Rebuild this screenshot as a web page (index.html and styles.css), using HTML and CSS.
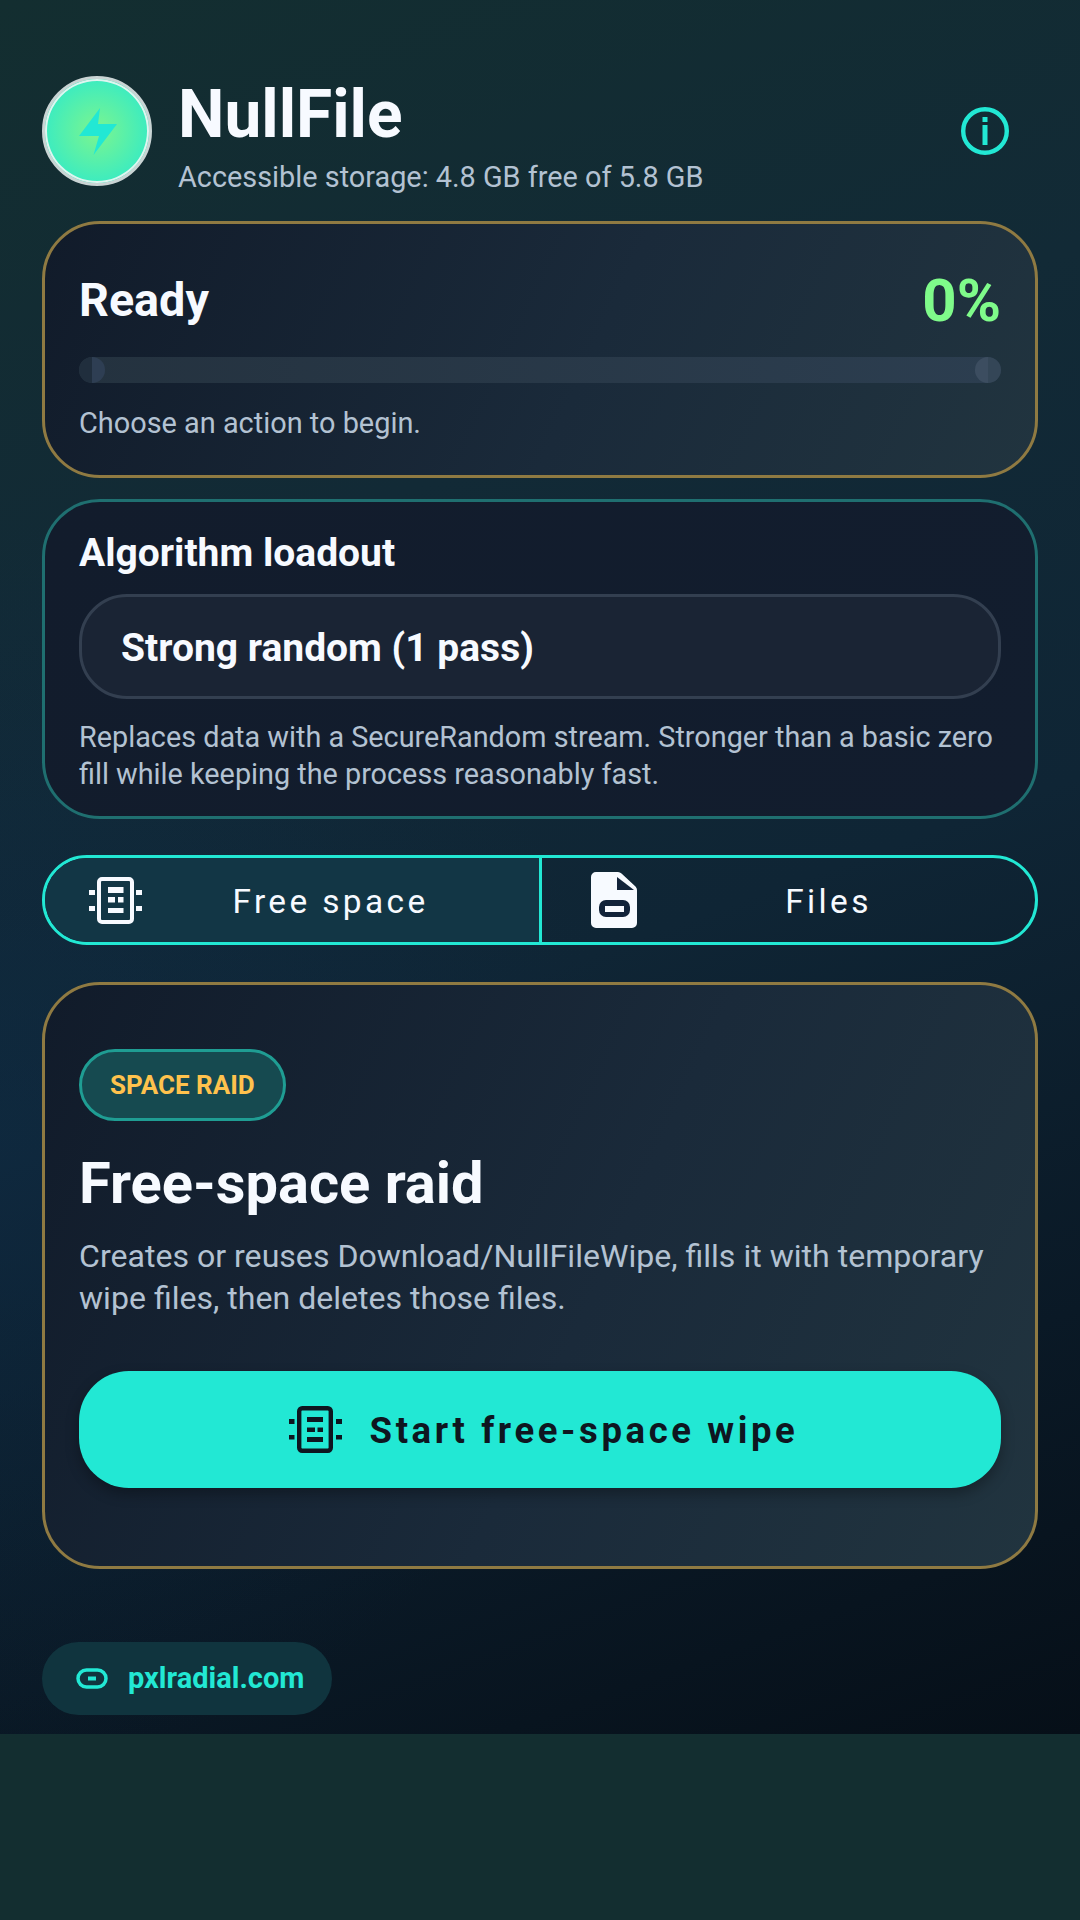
FILE: index.html
```html
<html>
    <head>
        <meta charset="utf-8">
        <title>NullFile</title>
        <link rel="stylesheet" href="styles.css">
    </head>
    <body>
        <div class="app">
            <div class="header">
                <div class="logo">
                    <svg class="bolt" width="38" height="47" viewBox="0 0 38 47"><path d="M21 0 L0 28 H20 L14.5 47 L38 16 H19 Z" fill="#22e8d4"/></svg>
                </div>
                <div class="headerText">
                    <div class="appName">NullFile</div>
                    <div class="storage">Accessible storage: 4.8 GB free of 5.8 GB</div>
                </div>
                <svg class="infoIcon" width="48" height="48" viewBox="0 0 48 48">
                    <circle cx="24" cy="24" r="21.8" fill="none" stroke="#22e8d4" stroke-width="4.4"/>
                    <rect x="21.5" y="18" width="5" height="20" fill="#22e8d4"/>
                    <rect x="21.5" y="10" width="5" height="5" fill="#22e8d4"/>
                </svg>
            </div>

            <div class="card goldCard statusCard">
                <div class="statusRow">
                    <div class="statusTitle">Ready</div>
                    <div class="statusPercent">0%</div>
                </div>
                <div class="progressTrack"></div>
                <div class="statusNote">Choose an action to begin.</div>
            </div>

            <div class="card tealCard">
                <div class="loadoutTitle">Algorithm loadout</div>
                <div class="selectBox">Strong random (1 pass)</div>
                <div class="loadoutNote">Replaces data with a SecureRandom stream. Stronger than a basic zero fill while keeping the process reasonably fast.</div>
            </div>

            <div class="tabs">
                <div class="tab tabActive">
                    <svg class="tabIcon" width="53" height="47" viewBox="0 0 53 47">
                        <rect x="10" y="2" width="33" height="43" rx="3" fill="none" stroke="#f7faff" stroke-width="4"/>
                        <path d="M19 10h15.5v6H19zM19 20h7v5.5h-7zM29 20h5.500v5.500H29zM19 31h15.500v5H19zM0 13h6v5H0zM0 29h6v5H0zM47 13h6v5h-6zM47 29h6v5h-6z" fill="#f7faff"/>
                    </svg>
                    <span class="tabLabel">Free space</span>
                </div>
                <div class="tab filesTab">
                    <svg class="tabIcon" width="46" height="56" viewBox="0 0 46 56">
                        <path d="M5 0H27Q29 0 30.500 1.500L44.500 14.500Q46 16 46 18V51a5 5 0 0 1-5 5H5a5 5 0 0 1-5-5V5a5 5 0 0 1 5-5Z" fill="#f7faff"/>
                        <path d="M26 5 L43 18 H26Z" fill="#12233a"/>
                        <rect x="8" y="28" width="31" height="17" rx="7" fill="#12233a"/>
                        <rect x="14" y="34" width="19" height="6" fill="#f7faff"/>
                    </svg>
                    <span class="tabLabel">Files</span>
                </div>
            </div>

            <div class="card goldCard raidCard">
                <div class="badge">SPACE RAID</div>
                <div class="raidTitle">Free-space raid</div>
                <div class="raidNote">Creates or reuses Download/NullFileWipe, fills it with temporary wipe files, then deletes those files.</div>
                <div class="startButton">
                    <svg width="53" height="47" viewBox="0 0 53 47">
                        <rect x="10.200" y="2.200" width="31.600" height="42.600" rx="3" fill="none" stroke="#0e1620" stroke-width="4.400"/>
                        <path d="M18 11h16v5H18zM18 21.500h8v4.500h-8zM28.500 21.500h5.500v4.500h-5.500zM18 31h16v5H18zM0 13h5.500v5H0zM0 29h5.500v4.500H0zM47 13h6v5h-6zM47 29h6v4.500h-6z" fill="#0e1620"/>
                    </svg>
                    <span class="startLabel">Start free-space wipe</span>
                </div>
            </div>

            <div class="sitePill">
                <svg width="32" height="21" viewBox="0 0 32 21">
                    <rect x="2" y="2" width="28" height="17" rx="8.500" fill="none" stroke="#22e8d4" stroke-width="3.500"/>
                    <rect x="12" y="8.500" width="8" height="4" fill="#22e8d4"/>
                </svg>
                <span class="siteLabel">pxlradial.com</span>
            </div>
        </div>
    </body>
</html>
```

FILE: styles.css
```css
body {
    margin: 0;
    padding: 0;
    width: 1080px;
    height: 1920px;
    overflow: hidden;
    background-color: #132e30;
    font-family: Roboto, sans-serif;
    color: #f7faff;
}
.app {
    box-sizing: border-box;
    height: 1734px;
    padding: 76px 42px 0;
    background:
        radial-gradient(ellipse 620px 620px at 0 1140px, rgba(14, 44, 72, 0.45), rgba(14, 44, 72, 0)),
        linear-gradient(160deg, #132e30 0%, #122a36 30%, #0f2535 55%, #0a1926 80%, #060f18 100%);
}

/* header */
.header {
    display: flex;
    align-items: flex-start;
    height: 145px;
}
.logo {
    box-sizing: border-box;
    width: 110px;
    height: 110px;
    border-radius: 50%;
    border: 3px solid #c9d4d4;
    box-shadow: inset 0 0 0 2px #dff5f0;
    background: radial-gradient(circle, #7cf58e 0%, #22e8d4 100%);
    display: flex;
    align-items: center;
    justify-content: center;
    flex-shrink: 0;
}
.bolt {
    margin-left: 2px;
}
.headerText {
    margin-left: 26px;
    flex-grow: 1;
}
.appName {
    font-size: 65.8px;
    font-weight: 700;
    line-height: 70px;
    margin-top: 4px;
}
.storage {
    font-size: 28.85px;
    line-height: 36px;
    color: #b3c2d2;
    margin-top: 9px;
}
.infoIcon {
    margin: 31px 29px 0 0;
}

/* cards */
.card {
    box-sizing: border-box;
    border-radius: 58px;
    border-width: 3px;
    border-style: solid;
    padding: 0 34px;
}
.goldCard {
    border-color: #8f7a42;
    background: linear-gradient(115deg, #111b2a 0%, #1a2a3a 55%, #21343f 100%);
}
.tealCard {
    height: 320px;
    margin-top: 21px;
    border-color: #1f6f70;
    background: linear-gradient(115deg, #121c2c, #121d2e);
}

/* status */
.statusCard {
    height: 257px;
}
.statusRow {
    display: flex;
    justify-content: space-between;
    align-items: center;
    height: 72px;
    margin-top: 40px;
}
.statusTitle {
    font-size: 46.7px;
    font-weight: 700;
}
.statusPercent {
    font-size: 60px;
    font-weight: 700;
    color: #7ffb8a;
}
.progressTrack {
    position: relative;
    height: 26px;
    margin-top: 21px;
    border-radius: 13px;
    background: linear-gradient(90deg, #24323f, #2c3e50);
    overflow: hidden;
}
.progressTrack::before,
.progressTrack::after {
    content: "";
    position: absolute;
    top: 0;
    width: 26px;
    height: 26px;
    border-radius: 50%;
}
.progressTrack::before {
    left: 0;
    background: linear-gradient(90deg, #202e3d 50%, #2e3e53 50%);
}
.progressTrack::after {
    right: 0;
    background: linear-gradient(90deg, #3c4d60 50%, #344657 50%);
}
.statusNote {
    font-size: 28.9px;
    line-height: 36px;
    margin-top: 22px;
    color: #b3c2d2;
}

/* loadout */
.loadoutTitle {
    font-size: 39px;
    font-weight: 700;
    line-height: 46px;
    margin-top: 28px;
}
.selectBox {
    box-sizing: border-box;
    height: 105px;
    margin-top: 18px;
    padding-left: 39px;
    border: 3px solid #333f50;
    border-radius: 48px;
    background-color: #1a2434;
    font-size: 39px;
    font-weight: 700;
    line-height: 103px;
}
.loadoutNote {
    font-size: 28.8px;
    line-height: 37px;
    margin-top: 20px;
    color: #b3c2d2;
}

/* tabs */
.tabs {
    display: flex;
    height: 90px;
    margin-top: 36px;
    box-sizing: border-box;
    border: 3px solid #22e8d4;
    border-radius: 45px;
    overflow: hidden;
}
.tab {
    flex: 1;
    display: flex;
    align-items: center;
    padding-left: 44px;
}
.tabActive {
    flex: none;
    box-sizing: border-box;
    width: 497px;
    background-color: #123645;
    border-right: 3px solid #22e8d4;
}
.filesTab {
    padding-left: 49px;
}
.tabLabel {
    flex: 1;
    text-align: center;
    font-size: 33.4px;
    letter-spacing: 3.4px;
    padding-top: 2px;
    padding-right: 20px;
}
.filesTab .tabLabel {
    padding-right: 15px;
}
.tabIcon {
    flex-shrink: 0;
}

/* raid */
.raidCard {
    height: 587px;
    margin-top: 37px;
}
.badge {
    display: inline-block;
    box-sizing: border-box;
    height: 72px;
    margin-top: 64px;
    padding: 0 28px;
    border: 3px solid #1f9d93;
    border-radius: 36px;
    background-color: #164a50;
    color: #ffc24d;
    font-size: 26px;
    font-weight: 700;
    line-height: 67px;
}
.raidTitle {
    font-size: 57.8px;
    font-weight: 700;
    line-height: 70px;
    margin-top: 27px;
}
.raidNote {
    font-size: 32.1px;
    line-height: 42px;
    margin-top: 17px;
    color: #b3c2d2;
}
.startButton {
    display: flex;
    align-items: center;
    justify-content: center;
    gap: 28px;
    height: 117px;
    margin-top: 52px;
    padding-left: 7px;
    border-radius: 50px;
    background-color: #22e8d4;
    box-shadow: 0 6px 14px rgba(0, 0, 0, 0.3);
    color: #0e1620;
    font-size: 36.5px;
    font-weight: 700;
    letter-spacing: 3.6px;
}
.startLabel {
    padding-top: 2px;
}

/* footer */
.sitePill {
    display: inline-flex;
    align-items: center;
    gap: 20px;
    height: 73px;
    margin-top: 73px;
    padding: 0 28px 0 34px;
    border-radius: 37px;
    background-color: #10343e;
    color: #22e8d4;
    font-size: 29px;
    font-weight: 700;
}
.siteLabel {
    margin-bottom: 2px;
}
```
